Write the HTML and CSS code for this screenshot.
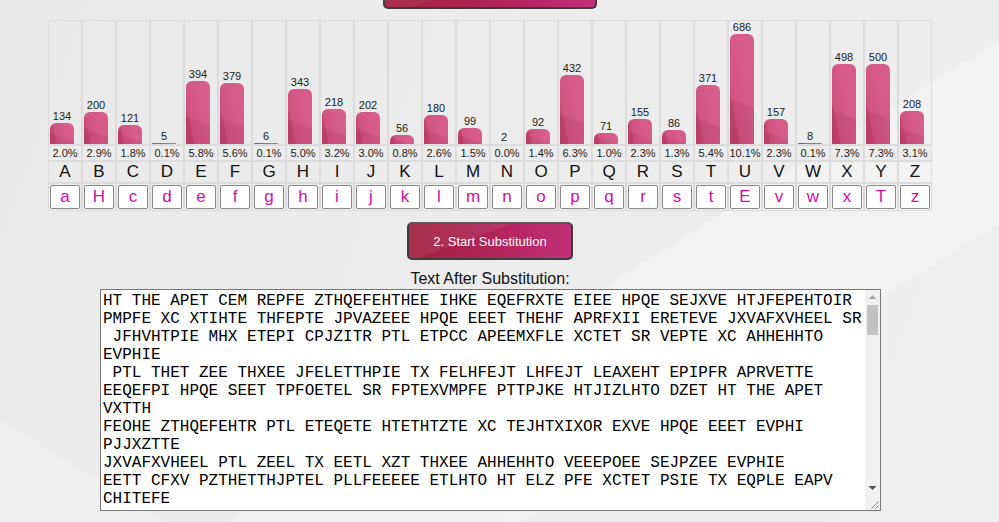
FILE: index.html
```html
<!DOCTYPE html>
<html>
<head>
<meta charset="utf-8">
<title>Substitution</title>
<link rel="stylesheet" href="styles.css">
</head>
<body>
<div class="page">
  <button class="btn btn-top" aria-label="1. Count Letter Frequency"></button>

  <div class="chart">
    <div class="col"><div class="cell c-bar"><div class="barwrap"><div class="count">134</div><div class="bar" style="height:21.44px"></div></div></div><div class="cell c-pct">2.0%</div><div class="cell c-letter">A</div><div class="cell c-input"><input class="sub" value="a"></div></div>
    <div class="col"><div class="cell c-bar"><div class="barwrap"><div class="count">200</div><div class="bar" style="height:32px"></div></div></div><div class="cell c-pct">2.9%</div><div class="cell c-letter">B</div><div class="cell c-input"><input class="sub" value="H"></div></div>
    <div class="col"><div class="cell c-bar"><div class="barwrap"><div class="count">121</div><div class="bar" style="height:19.36px"></div></div></div><div class="cell c-pct">1.8%</div><div class="cell c-letter">C</div><div class="cell c-input"><input class="sub" value="c"></div></div>
    <div class="col"><div class="cell c-bar"><div class="barwrap"><div class="count">5</div><div class="bar" style="height:0.8px"></div></div></div><div class="cell c-pct">0.1%</div><div class="cell c-letter">D</div><div class="cell c-input"><input class="sub" value="d"></div></div>
    <div class="col"><div class="cell c-bar"><div class="barwrap"><div class="count">394</div><div class="bar" style="height:63.04px"></div></div></div><div class="cell c-pct">5.8%</div><div class="cell c-letter">E</div><div class="cell c-input"><input class="sub" value="e"></div></div>
    <div class="col"><div class="cell c-bar"><div class="barwrap"><div class="count">379</div><div class="bar" style="height:60.64px"></div></div></div><div class="cell c-pct">5.6%</div><div class="cell c-letter">F</div><div class="cell c-input"><input class="sub" value="f"></div></div>
    <div class="col"><div class="cell c-bar"><div class="barwrap"><div class="count">6</div><div class="bar" style="height:0.96px"></div></div></div><div class="cell c-pct">0.1%</div><div class="cell c-letter">G</div><div class="cell c-input"><input class="sub" value="g"></div></div>
    <div class="col"><div class="cell c-bar"><div class="barwrap"><div class="count">343</div><div class="bar" style="height:54.88px"></div></div></div><div class="cell c-pct">5.0%</div><div class="cell c-letter">H</div><div class="cell c-input"><input class="sub" value="h"></div></div>
    <div class="col"><div class="cell c-bar"><div class="barwrap"><div class="count">218</div><div class="bar" style="height:34.88px"></div></div></div><div class="cell c-pct">3.2%</div><div class="cell c-letter">I</div><div class="cell c-input"><input class="sub" value="i"></div></div>
    <div class="col"><div class="cell c-bar"><div class="barwrap"><div class="count">202</div><div class="bar" style="height:32.32px"></div></div></div><div class="cell c-pct">3.0%</div><div class="cell c-letter">J</div><div class="cell c-input"><input class="sub" value="j"></div></div>
    <div class="col"><div class="cell c-bar"><div class="barwrap"><div class="count">56</div><div class="bar" style="height:8.96px"></div></div></div><div class="cell c-pct">0.8%</div><div class="cell c-letter">K</div><div class="cell c-input"><input class="sub" value="k"></div></div>
    <div class="col"><div class="cell c-bar"><div class="barwrap"><div class="count">180</div><div class="bar" style="height:28.8px"></div></div></div><div class="cell c-pct">2.6%</div><div class="cell c-letter">L</div><div class="cell c-input"><input class="sub" value="l"></div></div>
    <div class="col"><div class="cell c-bar"><div class="barwrap"><div class="count">99</div><div class="bar" style="height:15.84px"></div></div></div><div class="cell c-pct">1.5%</div><div class="cell c-letter">M</div><div class="cell c-input"><input class="sub" value="m"></div></div>
    <div class="col"><div class="cell c-bar"><div class="barwrap"><div class="count">2</div><div class="bar" style="height:0.32px"></div></div></div><div class="cell c-pct">0.0%</div><div class="cell c-letter">N</div><div class="cell c-input"><input class="sub" value="n"></div></div>
    <div class="col"><div class="cell c-bar"><div class="barwrap"><div class="count">92</div><div class="bar" style="height:14.72px"></div></div></div><div class="cell c-pct">1.4%</div><div class="cell c-letter">O</div><div class="cell c-input"><input class="sub" value="o"></div></div>
    <div class="col"><div class="cell c-bar"><div class="barwrap"><div class="count">432</div><div class="bar" style="height:69.12px"></div></div></div><div class="cell c-pct">6.3%</div><div class="cell c-letter">P</div><div class="cell c-input"><input class="sub" value="p"></div></div>
    <div class="col"><div class="cell c-bar"><div class="barwrap"><div class="count">71</div><div class="bar" style="height:11.36px"></div></div></div><div class="cell c-pct">1.0%</div><div class="cell c-letter">Q</div><div class="cell c-input"><input class="sub" value="q"></div></div>
    <div class="col"><div class="cell c-bar"><div class="barwrap"><div class="count">155</div><div class="bar" style="height:24.8px"></div></div></div><div class="cell c-pct">2.3%</div><div class="cell c-letter">R</div><div class="cell c-input"><input class="sub" value="r"></div></div>
    <div class="col"><div class="cell c-bar"><div class="barwrap"><div class="count">86</div><div class="bar" style="height:13.76px"></div></div></div><div class="cell c-pct">1.3%</div><div class="cell c-letter">S</div><div class="cell c-input"><input class="sub" value="s"></div></div>
    <div class="col"><div class="cell c-bar"><div class="barwrap"><div class="count">371</div><div class="bar" style="height:59.36px"></div></div></div><div class="cell c-pct">5.4%</div><div class="cell c-letter">T</div><div class="cell c-input"><input class="sub" value="t"></div></div>
    <div class="col"><div class="cell c-bar"><div class="barwrap"><div class="count">686</div><div class="bar" style="height:109.76px"></div></div></div><div class="cell c-pct">10.1%</div><div class="cell c-letter">U</div><div class="cell c-input"><input class="sub" value="E"></div></div>
    <div class="col"><div class="cell c-bar"><div class="barwrap"><div class="count">157</div><div class="bar" style="height:25.12px"></div></div></div><div class="cell c-pct">2.3%</div><div class="cell c-letter">V</div><div class="cell c-input"><input class="sub" value="v"></div></div>
    <div class="col"><div class="cell c-bar"><div class="barwrap"><div class="count">8</div><div class="bar" style="height:1.28px"></div></div></div><div class="cell c-pct">0.1%</div><div class="cell c-letter">W</div><div class="cell c-input"><input class="sub" value="w"></div></div>
    <div class="col"><div class="cell c-bar"><div class="barwrap"><div class="count">498</div><div class="bar" style="height:79.68px"></div></div></div><div class="cell c-pct">7.3%</div><div class="cell c-letter">X</div><div class="cell c-input"><input class="sub" value="x"></div></div>
    <div class="col"><div class="cell c-bar"><div class="barwrap"><div class="count">500</div><div class="bar" style="height:80px"></div></div></div><div class="cell c-pct">7.3%</div><div class="cell c-letter">Y</div><div class="cell c-input"><input class="sub" value="T"></div></div>
    <div class="col"><div class="cell c-bar"><div class="barwrap"><div class="count">208</div><div class="bar" style="height:33.28px"></div></div></div><div class="cell c-pct">3.1%</div><div class="cell c-letter">Z</div><div class="cell c-input"><input class="sub" value="z"></div></div>
  </div>

  <button class="btn btn-sub">2. Start Substitution</button>

  <div class="label">Text After Substitution:</div>
  <div class="outbox">
    <textarea class="output" wrap="off" spellcheck="false">HT THE APET CEM REPFE ZTHQEFEHTHEE IHKE EQEFRXTE EIEE HPQE SEJXVE HTJFEPEHTOIR
PMPFE XC XTIHTE THFEPTE JPVAZEEE HPQE EEET THEHF APRFXII ERETEVE JXVAFXVHEEL SR
 JFHVHTPIE MHX ETEPI CPJZITR PTL ETPCC APEEMXFLE XCTET SR VEPTE XC AHHEHHTO
EVPHIE
 PTL THET ZEE THXEE JFELETTHPIE TX FELHFEJT LHFEJT LEAXEHT EPIPFR APRVETTE
EEQEFPI HPQE SEET TPFOETEL SR FPTEXVMPFE PTTPJKE HTJIZLHTO DZET HT THE APET
VXTTH
FEOHE ZTHQEFEHTR PTL ETEQETE HTETHTZTE XC TEJHTXIXOR EXVE HPQE EEET EVPHI
PJJXZTTE
JXVAFXVHEEL PTL ZEEL TX EETL XZT THXEE AHHEHHTO VEEEPOEE SEJPZEE EVPHIE
EETT CFXV PZTHETTHJPTEL PLLFEEEEE ETLHTO HT ELZ PFE XCTET PSIE TX EQPLE EAPV
CHITEFE
 HPQE SEET TX THE APET EIEE ZTHQEFEHTR PTL SEJXVE XC HTJFEPEHTOIR
PMPFE THFEPTE JPVAZEEE EEET APRFXII ERETEVE SR VEPTE XC AHHEHHTO
EVPHIE PTL THET ZEE THXEE JFELETTHPIE TX FELHFEJT LHFEJT
LEAXEHT EPIPFR APRVETTE EEQEFPI HPQE SEET TPFOETEL SR FPTEXVMPFE
PTTPJKE HTJIZLHTO DZET HT THE APET VXTTH FEOHE
ZTHQEFEHTR PTL ETEQETE HTETHTZTE XC TEJHTXIXOR EXVE HPQE EEET
EVPHI PJJXZTTE JXVAFXVHEEL PTL ZEEL TX EETL XZT THXEE
AHHEHHTO VEEEPOEE SEJPZEE EVPHIE EETT CFXV PZTHETTHJPTEL
PLLFEEEEE ETLHTO HT ELZ PFE XCTET PSIE TX EQPLE EAPV CHITEFE</textarea>
    <div class="vscroll">
      <div class="sb-btn"><svg width="15" height="15" viewBox="0 0 15 15"><polygon points="3.5,9 7.5,5 11.5,9" fill="#a3a3a3"/></svg></div>
      <div class="sb-track"><div class="sb-thumb"></div></div>
      <div class="sb-btn"><svg width="15" height="15" viewBox="0 0 15 15"><polygon points="3.5,6 7.5,10 11.5,6" fill="#505050"/></svg></div>
      <div class="sb-corner"><svg width="15" height="15" viewBox="0 0 15 15"><path d="M13.5 6.5 L6.5 13.5 M13.5 10.5 L10.5 13.5" stroke="#8c8c8c" stroke-width="1" fill="none"/></svg></div>
    </div>
  </div>
</div>
</body>
</html>
```

FILE: styles.css
```css
html, body {
  margin: 0;
  padding: 0;
}

body {
  min-height: 522px;
  background-color: #ebebeb;
  background-image:
    linear-gradient(148deg, rgba(255,255,255,0) 0 58%, rgba(255,255,255,0.28) 58% 74%, rgba(255,255,255,0) 74%),
    linear-gradient(32deg, rgba(255,255,255,0.22) 0 9%, rgba(255,255,255,0) 9%),
    linear-gradient(110deg, #e9e9e9 0%, #ececec 45%, #eeeeee 100%);
  font-family: "Liberation Sans", Arial, sans-serif;
  color: #1a1a1a;
  overflow: hidden;
}

.page {
  width: 980px;
}

.btn {
  display: block;
  margin: 0 auto;
  height: 38px;
  border: 2px solid #3c3c3c;
  border-top-color: #5a5a5a;
  border-radius: 5px;
  background:
    linear-gradient(160deg, rgba(255,255,255,0.06) 0 40%, rgba(255,255,255,0) 40%),
    linear-gradient(90deg, #a3223f 0%, #ad2452 40%, #b72764 70%, #c0307a 100%);
  color: #ffffff;
  font-family: "Liberation Sans", Arial, sans-serif;
  font-size: 13px;
  padding: 0;
  cursor: pointer;
}

.btn-top {
  width: 214px;
  margin-top: -29px;
}

.btn-sub {
  width: 166px;
  margin-top: 11px;
}

/* ---------- chart ---------- */
.chart {
  display: flex;
  width: 884px;
  margin: 11px auto 0;
}

.col {
  display: flex;
  flex-direction: column;
  width: 34px;
}

.cell {
  border: 1px solid #dcdcdc;
  text-align: center;
}

.c-bar {
  height: 123px;
  display: flex;
  flex-direction: column;
  justify-content: flex-end;
  align-items: flex-start;
  padding-left: 1px;
}

.barwrap {
  width: 24px;
  text-align: center;
}

.count {
  font-size: 11px;
  line-height: 13px;
  color: #1a1a1a;
}

.bar {
  border-radius: 6px 6px 0 0;
  background:
    linear-gradient(200deg, rgba(255,255,255,0) 0 62%, rgba(120,10,50,0.10) 62%),
    linear-gradient(78deg, #c1416d 0%, #c54672 22%, #d0527f 22%, #d65b8a 60%, #d85e8c 100%);
}

.c-pct {
  height: 14px;
  font-size: 11px;
  line-height: 14px;
  background: #ececec;
}

.c-letter {
  height: 20px;
  font-size: 17px;
  line-height: 20px;
  color: #111;
}

.c-input {
  height: 24px;
  padding: 1px 0;
  display: flex;
  justify-content: center;
}

.sub {
  box-sizing: border-box;
  width: 30px;
  height: 24px;
  margin: 0;
  padding: 0;
  border: 1px solid #8a8a8a;
  border-radius: 2px;
  background: #fff;
  color: #d00fa8;
  font-family: "Liberation Sans", Arial, sans-serif;
  font-size: 17px;
  text-align: center;
}

/* ---------- output ---------- */
.label {
  margin-top: 10px;
  text-align: center;
  font-size: 16px;
  line-height: 18px;
  color: #111;
}

.outbox {
  display: flex;
  box-sizing: border-box;
  width: 781px;
  height: 222px;
  margin: 1px 0 0 100px;
  border: 1px solid #777;
  background: #fff;
}

.output {
  flex: 1;
  min-width: 0;
  box-sizing: border-box;
  height: 100%;
  margin: 0;
  padding: 2px;
  border: none;
  outline: none;
  background: #fff;
  color: #000;
  font-family: "Liberation Mono", "Courier New", monospace;
  font-size: 16px;
  line-height: normal;
  white-space: pre;
  overflow: hidden;
  resize: none;
}

.vscroll {
  width: 15px;
  display: flex;
  flex-direction: column;
  background: #f1f1f1;
}

.sb-btn,
.sb-corner {
  height: 15px;
  flex: none;
}

.sb-btn svg,
.sb-corner svg {
  display: block;
}

.sb-track {
  flex: 1;
  padding: 0 2px;
}

.sb-thumb {
  height: 30px;
  background: #c1c1c1;
}
```
